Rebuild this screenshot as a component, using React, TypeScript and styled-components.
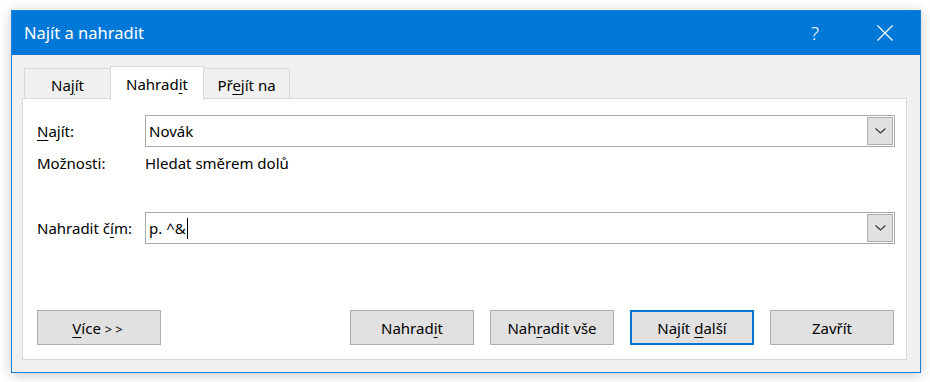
import styled, { createGlobalStyle } from "styled-components";

const GlobalStyle = createGlobalStyle`
  html, body {
    margin: 0;
    padding: 0;
    background: #ffffff;
  }
  body {
    font-family: "Noto Sans", "Open Sans", sans-serif;
    color: #000;
  }
`;

const Page = styled.div`
  width: 930px;
  height: 382px;
  box-sizing: border-box;
  padding: 10px 0 0 11px;
`;

const Window = styled.div`
  width: 910px;
  height: 363px;
  box-sizing: border-box;
  border: 1px solid #1a7fd7;
  background: #f0f0f0;
  display: flex;
  flex-direction: column;
  box-shadow: 0 2px 12px rgba(0, 0, 0, 0.22);
`;

const TitleBar = styled.div`
  height: 44px;
  flex-shrink: 0;
  background: #0078d7;
  color: #fff;
  display: flex;
  align-items: center;
  padding-left: 12px;
`;

const Title = styled.div`
  flex: 1;
  font-size: 16.5px;
  margin-top: -1px;
`;

const TitleButton = styled.div`
  width: 70px;
  height: 44px;
  display: flex;
  align-items: center;
  justify-content: center;
  font-size: 19px;
  font-weight: 300;
`;

const Body = styled.div`
  flex: 1;
  display: flex;
  flex-direction: column;
  padding: 11px 13px 12px 10px;
  min-height: 0;
`;

const TabStrip = styled.div`
  display: flex;
  align-items: flex-end;
  height: 34px;
  margin: 0 0 -2px 2px;
  position: relative;
  z-index: 1;
`;

const Tab = styled.div<{ $active?: boolean }>`
  box-sizing: border-box;
  width: ${(p) => (p.$active ? 94 : 86)}px;
  height: ${(p) => (p.$active ? 34 : 30)}px;
  margin-bottom: ${(p) => (p.$active ? 0 : 2)}px;
  border: 1px solid #d9d9d9;
  border-bottom: none;
  border-left-width: ${(p) => (p.$active ? 1 : 0)}px;
  border-right-width: ${(p) => (p.$active ? 1 : 0)}px;
  background: ${(p) => (p.$active ? "#fff" : "#f0f0f0")};
  display: flex;
  align-items: center;
  justify-content: center;
  font-size: 15px;
  padding-top: ${(p) => (p.$active ? 0 : 2)}px;

  &:first-child {
    border-left-width: 1px;
  }
  &:last-child {
    border-right-width: 1px;
  }
`;

const Panel = styled.div`
  flex: 1;
  background: #fff;
  border: 1px solid #d9d9d9;
  display: flex;
  flex-direction: column;
  padding: 16px 11px 14px 14px;
`;

const FormGrid = styled.div`
  display: grid;
  grid-template-columns: 108px 1fr;
  align-items: center;
  font-size: 15px;
`;

const Label = styled.div<{ $gapTop?: number }>`
  margin-top: ${(p) => p.$gapTop ?? 0}px;
`;

const Value = styled.div<{ $gapTop?: number }>`
  margin-top: ${(p) => p.$gapTop ?? 0}px;
`;

const Combo = styled.div<{ $gapTop?: number }>`
  box-sizing: border-box;
  height: 32px;
  margin-top: ${(p) => p.$gapTop ?? 0}px;
  border: 1px solid #a9a9a9;
  display: flex;
  align-items: stretch;
  padding: 1px;
`;

const ComboText = styled.div`
  flex: 1;
  display: flex;
  align-items: center;
  padding-left: 2px;
  font-size: 15px;
  white-space: pre;
`;

const Caret = styled.span`
  display: inline-block;
  width: 1px;
  height: 21px;
  background: #000;
  margin-left: 1px;
`;

const DropButton = styled.div`
  box-sizing: border-box;
  width: 26px;
  background: #e1e1e1;
  border: 1px solid #adadad;
  display: flex;
  align-items: center;
  justify-content: center;
`;

const ButtonRow = styled.div`
  margin-top: auto;
  display: flex;
  gap: 16px;
  padding-right: 1px;
`;

const Button = styled.div<{ $default?: boolean }>`
  box-sizing: border-box;
  width: 124px;
  height: 35px;
  background: #e1e1e1;
  border: ${(p) => (p.$default ? "2px solid #0078d7" : "1px solid #adadad")};
  display: flex;
  align-items: center;
  justify-content: center;
  font-size: 15px;

  &:first-child {
    margin-right: auto;
  }
`;

const Key = styled.span`
  text-decoration: underline;
  text-underline-offset: 3px;
  text-decoration-thickness: 1px;
`;

const Arrows = styled.span`
  letter-spacing: 3px;
  font-size: 13px;
`;

const Chevron = () => (
  <svg width="11" height="6" viewBox="0 0 11 6">
    <polyline points="0.5,0.5 5.5,5 10.5,0.5" fill="none" stroke="#333" strokeWidth="1.1" />
  </svg>
);

const CloseIcon = () => (
  <svg width="16" height="16" viewBox="0 0 16 16">
    <path d="M0.5 0.5 L15.5 15.5 M15.5 0.5 L0.5 15.5" stroke="#fff" strokeWidth="1.2" />
  </svg>
);

export default function App() {
  return (
    <>
      <GlobalStyle />
      <Page>
        <Window>
          <TitleBar>
            <Title>Najít a nahradit</Title>
            <TitleButton>?</TitleButton>
            <TitleButton>
              <CloseIcon />
            </TitleButton>
          </TitleBar>
          <Body>
            <TabStrip>
              <Tab>
                <span>
                  Na<Key>j</Key>ít
                </span>
              </Tab>
              <Tab $active>
                <span>
                  Nahrad<Key>i</Key>t
                </span>
              </Tab>
              <Tab>
                <span>
                  Př<Key>e</Key>jít na
                </span>
              </Tab>
            </TabStrip>
            <Panel>
              <FormGrid>
                <Label>
                  <Key>N</Key>ajít:
                </Label>
                <Combo>
                  <ComboText>Novák</ComboText>
                  <DropButton>
                    <Chevron />
                  </DropButton>
                </Combo>
                <Label $gapTop={6}>Možnosti:</Label>
                <Value $gapTop={6}>Hledat směrem dolů</Value>
                <Label $gapTop={39}>
                  Nahradit č<Key>í</Key>m:
                </Label>
                <Combo $gapTop={39}>
                  <ComboText>
                    p. ^&amp;
                    <Caret />
                  </ComboText>
                  <DropButton>
                    <Chevron />
                  </DropButton>
                </Combo>
              </FormGrid>
              <ButtonRow>
                <Button>
                  <span>
                    <Key>V</Key>íce <Arrows>&gt;&gt;</Arrows>
                  </span>
                </Button>
                <Button>
                  <span>
                    Nahrad<Key>i</Key>t
                  </span>
                </Button>
                <Button>
                  <span>
                    Nah<Key>r</Key>adit vše
                  </span>
                </Button>
                <Button $default>
                  <span>
                    Najít <Key>d</Key>alší
                  </span>
                </Button>
                <Button>
                  <span>Zavřít</span>
                </Button>
              </ButtonRow>
            </Panel>
          </Body>
        </Window>
      </Page>
    </>
  );
}
